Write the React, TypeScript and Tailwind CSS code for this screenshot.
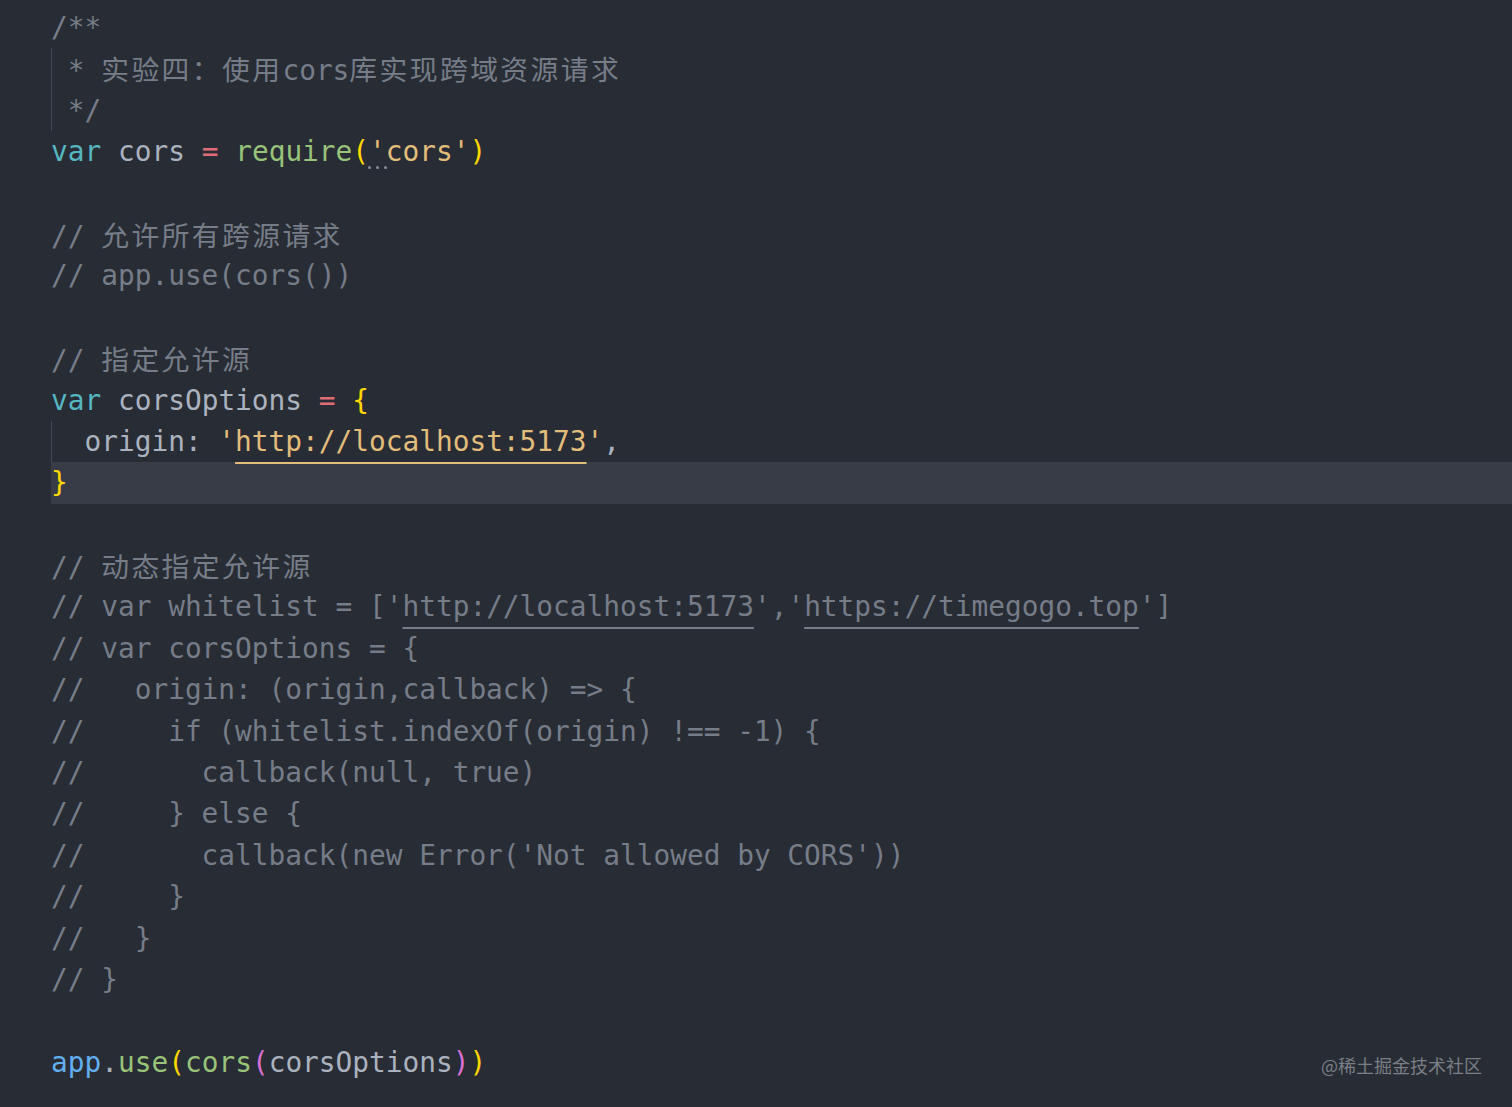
type Tok = { t: string; c: string; u?: boolean; cjk?: boolean };

const CM = "text-[#767c88]";
const ID = "text-[#abb2bf]";
const KW = "text-[#56b6c2]";
const OP = "text-[#e06c75]";
const FN = "text-[#98c379]";
const GOLD = "text-[#ffd700]";
const MAG = "text-[#da70d6]";
const STR = "text-[#e2bd7c]";
const BLUE = "text-[#61afef]";

const c = (t: string, cls = CM): Tok => ({ t, c: cls });
const cj = (t: string, cls = CM): Tok => ({ t, c: cls, cjk: true });
const u = (t: string, cls: string): Tok => ({ t, c: cls, u: true });

type Line = { toks: Tok[]; guide?: boolean; active?: boolean; hint?: boolean };

const lines: Line[] = [
  { toks: [c("/**")] },
  { toks: [c(" * "), cj("实验四：使用"), c("cors"), cj("库实现跨域资源请求")], guide: true },
  { toks: [c(" */")], guide: true },
  {
    toks: [
      c("var", KW), c(" "), c("cors", ID), c(" "), c("=", OP), c(" "),
      c("require", FN), c("(", GOLD), c("'cors'", STR), c(")", GOLD),
    ],
    hint: true,
  },
  { toks: [] },
  { toks: [c("// "), cj("允许所有跨源请求")] },
  { toks: [c("// app.use(cors())")] },
  { toks: [] },
  { toks: [c("// "), cj("指定允许源")] },
  { toks: [c("var", KW), c(" "), c("corsOptions", ID), c(" "), c("=", OP), c(" "), c("{", GOLD)] },
  {
    toks: [c("  origin: ", ID), c("'", STR), u("http://localhost:5173", STR), c("'", STR), c(",", ID)],
    guide: true,
  },
  { toks: [c("}", GOLD)], active: true },
  { toks: [] },
  { toks: [c("// "), cj("动态指定允许源")] },
  {
    toks: [
      c("// var whitelist = ['"), u("http://localhost:5173", CM), c("','"),
      u("https://timegogo.top", CM), c("']"),
    ],
  },
  { toks: [c("// var corsOptions = {")] },
  { toks: [c("//   origin: (origin,callback) => {")] },
  { toks: [c("//     if (whitelist.indexOf(origin) !== -1) {")] },
  { toks: [c("//       callback(null, true)")] },
  { toks: [c("//     } else {")] },
  { toks: [c("//       callback(new Error('Not allowed by CORS'))")] },
  { toks: [c("//     }")] },
  { toks: [c("//   }")] },
  { toks: [c("// }")] },
  { toks: [] },
  {
    toks: [
      c("app", BLUE), c(".", ID), c("use", FN), c("(", GOLD), c("cors", FN), c("(", MAG),
      c("corsOptions", ID), c(")", MAG), c(")", GOLD),
    ],
  },
];

function Token({ tok }: { tok: Tok }) {
  const cls = [tok.c];
  if (tok.u) cls.push("underline decoration-2 underline-offset-[11px]");
  if (tok.cjk) cls.push("font-['Noto_Sans_CJK_SC',sans-serif] tracking-[2.4px]");
  return <span className={cls.join(" ")}>{tok.t}</span>;
}

export default function App() {
  return (
    <div className="relative min-h-screen w-full overflow-hidden bg-[#282c34] pt-[7px] font-['DejaVu_Sans_Mono','Noto_Sans_CJK_SC',monospace] text-[27.8px] leading-[41.4px]">
      {lines.map((line, i) => (
        <div key={i} className={`ml-[51px] h-[41.4px] ${line.active ? "bg-[#373c47]" : ""}`}>
          <div
            className={`relative h-full whitespace-pre ${
              line.guide ? "shadow-[inset_1px_0_0_#424854]" : ""
            }`}
          >
            {line.toks.map((tok, j) => (
              <Token key={j} tok={tok} />
            ))}
            {line.hint && (
              <span className="absolute left-[317px] top-[35px] flex gap-[5px]">
                <span className="h-[3px] w-[3px] rounded-full bg-[#8a909b]" />
                <span className="h-[3px] w-[3px] rounded-full bg-[#8a909b]" />
                <span className="h-[3px] w-[3px] rounded-full bg-[#8a909b]" />
              </span>
            )}
          </div>
        </div>
      ))}
      <div className="absolute bottom-[33px] right-[30px] font-['Noto_Sans_CJK_SC',sans-serif] text-[18px] leading-none text-[#7a7e86]">
        @稀土掘金技术社区
      </div>
    </div>
  );
}
